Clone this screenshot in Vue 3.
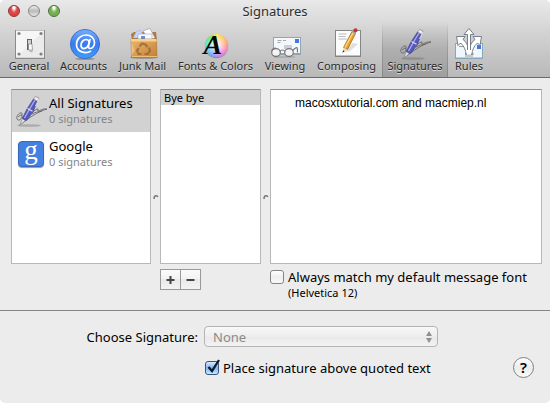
<script setup>
import { ref } from 'vue'

const tabs = ['General', 'Accounts', 'Junk Mail', 'Fonts & Colors', 'Viewing', 'Composing', 'Signatures', 'Rules']
const activeTab = ref('Signatures')
const accounts = [
  { name: 'All Signatures', count: 0 },
  { name: 'Google', count: 0 },
]
const activeAccount = ref('All Signatures')
const body = ref('macosxtutorial.com and macmiep.nl')
const matchFont = ref(false)
const placeAbove = ref(true)
</script>

<template>
  <main class="window">
    <svg class="defs" aria-hidden="true">
      <defs>
        <linearGradient id="blue" x1="0" y1="0" x2="0" y2="1"><stop offset="0" stop-color="#77aefa" /><stop offset=".5" stop-color="#3a7bed" /><stop offset="1" stop-color="#3f9dff" /></linearGradient>
        <linearGradient id="bag" x1="0" y1="0" x2="1" y2="1"><stop offset="0" stop-color="#e9b36d" /><stop offset=".5" stop-color="#d99c53" /><stop offset="1" stop-color="#c18037" /></linearGradient>
        <symbol id="pen" viewBox="0 0 32 32">
          <ellipse cx="14" cy="30.500" rx="12" ry="1.300" fill="#555" opacity=".3" />
          <g fill="none" stroke="#666" stroke-width=".9">
            <path d="M5 18c-2 1-4 4-3 6s4 1 5-2-2-2-4 0M5 18c2-1 3 1 1 3" />
            <path d="M7 23c7-3 11-7 15-9 2-1 0 2 1 2 2 0 5-3 9-2-10 3-18 9-26 15M17 19c3-2 6-2 10-3" />
          </g>
          <path d="M4.500 30.500 8 22.500l3.500 2z" fill="#e8e8e8" stroke="#777" stroke-width=".6" />
          <path d="M7.500 23 12 14l6.500-10 4 2L18 17l-6.500 8.500c-1.500 0-3.500-1-4-2.500z" fill="#5558bd" stroke="#3a3c86" stroke-width=".6" />
          <path d="M9.500 23 14 15 20 5" fill="none" stroke="#aeb0f0" stroke-width="1.300" />
          <path d="m12.500 13.500 5 2.800" stroke="#dcdcec" stroke-width="1.300" />
          <path d="m18.500 4 2-2.500 3.500 1.500-1.500 3.500z" fill="#eeeef3" stroke="#777" stroke-width=".6" />
          <path d="m24 4-3.500 7" stroke="#e2e2ee" stroke-width="1" />
        </symbol>
      </defs>
    </svg>
    <header class="chrome">
      <div class="titlebar">
        <div class="lights">
          <button class="light red" type="button" aria-label="Close"></button>
          <button class="light gray" type="button" aria-label="Minimize"></button>
          <button class="light green" type="button" aria-label="Zoom"></button>
        </div>
        <h1 class="title">Signatures</h1>
      </div>
      <nav class="toolbar">
        <button
          v-for="tab in tabs"
          :key="tab"
          type="button"
          class="tab"
          :class="{ active: tab === activeTab }"
          @click="activeTab = tab"
        >
          <svg v-if="tab === 'General'" class="icon" viewBox="0 0 32 32">
            <rect x="2" y="2" width="30" height="29" fill="#8a8a8a" />
            <rect x="3" y="2.500" width="28" height="27" fill="#f6f6f6" />
            <path d="M3 29.500 31 2.500v27z" fill="#ebebeb" />
            <g fill="#7d838c"><circle cx="6" cy="5.500" r="1.600" /><circle cx="28" cy="5.500" r="1.600" /><circle cx="6" cy="26" r="1.600" /><circle cx="28" cy="26" r="1.600" /></g>
            <path d="M14 11h5v11h-5z" fill="#666" />
            <path d="M15 12h3v4h-3z" fill="#d0d0d0" />
            <path d="M15.500 16h3.500l.5 6h-4z" fill="#fafafa" stroke="#777" stroke-width=".6" />
            <path d="M15 22.500h5l-1 2z" fill="#aaa" />
          </svg>
          <svg v-else-if="tab === 'Accounts'" class="icon" viewBox="0 0 32 32">
            <ellipse cx="17" cy="30.800" rx="10" ry="1.200" fill="#666" opacity=".5" />
            <circle cx="17" cy="16" r="14.600" fill="url(#blue)" stroke="#2f62cf" stroke-width=".8" />
            <g fill="none" stroke="#fff" stroke-width="1.700" stroke-linecap="round">
              <path d="M22.500 23.300C18 26 8.500 24.500 8.500 16.500 8.500 11 13 7 18 7c5 0 8.500 3.300 8.500 7.700 0 3.300-2 5.800-4.200 5.800-2 0-2-1.500-1.600-3.200L22 11.500" />
              <path d="M21.300 14.500c-.3-2-1.500-3-3.300-3-3 0-5 3-5 5.800 0 2 1.100 3.300 2.800 3.300 2.700 0 4.500-2.600 5.200-5.300" />
            </g>
          </svg>
          <svg v-else-if="tab === 'Junk Mail'" class="icon" viewBox="0 0 32 32">
            <ellipse cx="17" cy="29.500" rx="14" ry="1.300" fill="#555" opacity=".5" />
            <path d="m4 6 3-2h22l1 8H5z" fill="#b07a3e" />
            <path d="m6 10 3-6 4-2 6 8z" fill="#c5d7fa" stroke="#8ea8db" stroke-width=".5" />
            <path d="m16 3 7-2.500 5 9.500-6 2z" fill="#fff" stroke="#999" stroke-width=".6" />
            <path d="M11 6h14v8H11z" fill="#f8faff" stroke="#8aa2cc" stroke-width=".6" />
            <path d="M14 8h4v3h-4z" fill="#6490dd" />
            <path d="M4 11h25.500l.5 18H4.500z" fill="url(#bag)" stroke="#ab7032" stroke-width=".6" />
            <path d="M4 11h25.500l.3 2.500H3.800z" fill="#f8d18f" />
            <path d="m4.500 14 3 8-3 6z" fill="#f1c17d" />
            <path d="M5 28.500h25" stroke="#f0bf77" />
            <g fill="none" stroke="#8d6234" stroke-width="2.200" opacity=".7"><path d="m12.500 18.500 2.500-3 3.500 1 2 2.500" /><path d="m22 19.500 1 3.500-2.500 3h-3" /><path d="M14.500 26h-3L10 22.500l2-2.500" /></g>
          </svg>
          <span v-else-if="tab === 'Fonts & Colors'" class="icon wheel"><i class="letter">A</i></span>
          <svg v-else-if="tab === 'Viewing'" class="icon" viewBox="0 0 32 32">
            <path d="M4 9h29v18H4z" fill="#95a4b2" />
            <path d="M5 10h26v15H5z" fill="#f5f8fb" />
            <path d="M26 11h4v4h-4z" fill="#3f79e8" />
            <path d="M8.500 12.500h4M8.500 14.500h3M14 12.500h3M15 18h8M15 20h8M17 22h5" stroke="#a3a8ad" stroke-width="1" />
            <g fill="#f4f4f4" stroke="#777" stroke-width="1.200"><ellipse cx="7" cy="24.500" rx="4.300" ry="3.800" /><ellipse cx="20" cy="24.500" rx="4.300" ry="3.800" /><path d="M11 23.500c1-2 4-2 5 0M23.500 22.500l3-2.500c2-1 2 0 2 4.500M3 23c0-2 2-3 4-3" fill="none" /></g>
            <path d="M5 29h21" stroke="#555" opacity=".35" />
          </svg>
          <svg v-else-if="tab === 'Composing'" class="icon" viewBox="0 0 32 32">
            <path d="M4 2h26v27H4z" fill="#858585" />
            <path d="M5 3h24v24.500H5z" fill="#fcfcfc" />
            <path d="M7.500 6h8M7.500 8.500h7M7.500 11h8" stroke="#aaa" stroke-width=".8" />
            <path d="m13 24 9-9 5 1-8 7z" fill="#aaa" opacity=".35" />
            <path d="m12.500 19.500 8.500-16 3.500 2-8 16z" fill="#eba02b" stroke="#946020" stroke-width=".7" />
            <path d="M14 19.500 22.500 4" stroke="#ffdc6e" stroke-width="1.400" />
            <path d="m11.800 24 .8-4.500 3.800 2z" fill="#f0d5a6" /><path d="m11.500 24.800.5-2.600 1.600 1z" fill="#222" />
            <path d="m20.500 4 1.400-2.500 3.600 2-1.400 2.600z" fill="#9da6b1" /><circle cx="24.500" cy="2.300" r="2.100" fill="#c73636" />
          </svg>
          <svg v-else-if="tab === 'Signatures'" class="icon" viewBox="0 0 32 32"><use href="#pen" /></svg>
          <svg v-else class="icon" viewBox="0 0 32 32">
            <path d="M2 15h28v16H2z" fill="#8ba6b7" />
            <path d="M3 16h26v13.500H3z" fill="#eff7fc" />
            <path d="M24 17h4v4h-4z" fill="#3f79e8" /><path d="M6 18.500h4M12 26h9M12 28h8" stroke="#999" />
            <g fill="#fff" stroke="#74808a" stroke-width="1" stroke-linejoin="round">
              <path d="M13 27c0-5-2-9-5.500-12L5 17.500 3.500 8.500h8.500l-2 3c3 2 5 6 6 10z" />
              <path d="M19 27c0-5 2-9 5.500-12l2.500 2.500 1.500-9H20l2 3c-3 2-5 6-6 10z" />
              <path d="M14.500 25V6.500H11l5-6 5 6h-3.500V25z" />
            </g>
            <path d="M13.800 22h4.400v4.500h-4.400z" fill="#fff" />
          </svg>
          <span class="tab-label">{{ tab }}</span>
        </button>
      </nav>
    </header>

    <section class="panes">
      <div class="pane accounts">
        <button
          v-for="account in accounts"
          :key="account.name"
          type="button"
          class="account"
          :class="{ active: account.name === activeAccount }"
          @click="activeAccount = account.name"
        >
          <svg v-if="account.name === 'All Signatures'" class="icon" viewBox="0 0 32 32"><use href="#pen" /></svg>
          <span v-else class="icon google"><span class="google-tile">g</span></span>
          <span class="account-text">
            <span class="account-name">{{ account.name }}</span>
            <span class="account-count">{{ account.count }} signatures</span>
          </span>
        </button>
      </div>
      <div class="grip"><svg class="grip-mark" viewBox="0 0 6 6"><path d="M1 5c0-4 3-4 4-2" fill="none" stroke="#777" stroke-width="1.500" /></svg></div>
      <div class="pane names">
        <button type="button" class="name active">Bye bye</button>
      </div>
      <div class="grip"><svg class="grip-mark" viewBox="0 0 6 6"><path d="M1 5c0-4 3-4 4-2" fill="none" stroke="#777" stroke-width="1.500" /></svg></div>
      <textarea v-model="body" class="pane editor" aria-label="Signature text" spellcheck="false"></textarea>

      <div class="add-remove">
        <button type="button" class="square" aria-label="Add signature"><svg class="glyph" viewBox="0 0 9 9"><path d="M4.500 1v8M.5 5h8" stroke="#444" stroke-width="2" /></svg></button>
        <button type="button" class="square" aria-label="Remove signature"><svg class="glyph" viewBox="0 0 9 9"><path d="M.5 5h8" stroke="#444" stroke-width="2" /></svg></button>
      </div>
      <div class="match">
        <label class="check">
          <span class="box">
            <input v-model="matchFont" type="checkbox" class="tick" />
            <svg v-if="matchFont" class="mark" viewBox="0 0 16 16"><path d="m3.500 8 3.500 4L14 1" fill="none" stroke="#0c1a33" stroke-width="2.300" /></svg>
          </span>
          Always match my default message font
        </label>
        <p class="hint">(Helvetica 12)</p>
      </div>
    </section>

    <section class="options">
      <label class="choose-label" for="choose">Choose Signature:</label>
      <div class="select-wrap">
        <select id="choose" class="select" disabled><option>None</option></select>
        <svg class="arrows" viewBox="0 0 6 12"><path d="M3 0 6 5H0zM3 12 0 7h6z" fill="#909090" /></svg>
      </div>
      <label class="check place">
        <span class="box">
          <input v-model="placeAbove" type="checkbox" class="tick" />
          <svg v-if="placeAbove" class="mark" viewBox="0 0 16 16"><path d="m3.500 8 3.500 4L14 1" fill="none" stroke="#0c1a33" stroke-width="2.300" /></svg>
        </span>
        Place signature above quoted text
      </label>
      <button type="button" class="help" aria-label="Help">?</button>
    </section>
  </main>
</template>

<style>
body { background: #fff; }
</style>

<style scoped>
* { box-sizing: border-box; }
button, select, textarea, input { margin: 0; padding: 0; border: 0; font: inherit; color: inherit; }
.window {
  display: flex;
  flex-direction: column;
  min-height: 100vh;
  overflow: hidden;
  border-radius: 5px;
  background: #ececec;
  font-family: "Lucida Grande", "Noto Sans", "Open Sans", sans-serif;
  font-size: 13px;
  line-height: 16px;
  color: #000;
}
.defs { position: absolute; width: 0; height: 0; }
.chrome {
  border-bottom: 1px solid #6a6a6a;
  background: linear-gradient(#e9e9e9, #d4d4d4 40%, #b9b9b9);
}
.titlebar {
  display: grid;
  grid-template-columns: 1fr auto 1fr;
  align-items: center;
  height: 22px;
  padding: 0 8px;
}
.lights { display: flex; gap: 8px; }
.light {
  width: 12px;
  height: 12px;
  border: 1px solid #666;
  border-radius: 50%;
}
.red { border-color: #8c3232; background: radial-gradient(ellipse at 50% 15%, #fff 0 10%, #e65352 40%, #d83b3b 65%, #ff9a90); }
.gray { border-color: #858585; background: linear-gradient(#eee, #b9b9b9 50%, #e6e6e6); }
.green { border-color: #467032; background: radial-gradient(ellipse at 50% 15%, #fff 0 10%, #7fb95b 40%, #6daa49 65%, #ccf69d); }
.title { margin: 0; font-size: 13px; font-weight: 400; color: #2e2e2e; text-shadow: 0 1px #eee; }
.toolbar {
  display: grid;
  grid-template-columns: 50px 59px 59px 87px 52px 71px 66px 42px;
  height: 55px;
  padding-left: 4px;
}
.tab {
  display: flex;
  flex-direction: column;
  align-items: center;
  padding-top: 6px;
  background: none;
  font-size: 11px;
  line-height: 12px;
  color: #2b2b2b;
  text-shadow: 0 1px #ddd;
}
.tab-label { white-space: nowrap; }
.tab.active {
  border: solid;
  border-width: 0 1px;
  border-image: linear-gradient(#8880, #888) 1;
  background: linear-gradient(#9990, #9998 50%, #8888);
}
.icon { display: block; flex: none; width: 32px; height: 32px; }
.wheel { display: flex; justify-content: center; align-items: center; position: relative; }
.wheel::before {
  content: "";
  width: 23px;
  height: 23px;
  margin: 2px 0 0 2px;
  border-radius: 50%;
  background: radial-gradient(#fff 5%, #fff0 70%), conic-gradient(#ffe650, #ff9080 90deg, #ee70df 140deg, #6da0ff 210deg, #46e4e0 265deg, #62ed66 320deg, #ffe650);
  box-shadow: 0 1px 1px #888;
}
.letter {
  position: absolute;
  top: 3px;
  left: 4px;
  font: italic bold 28px/28px "Liberation Serif", serif;
  color: #080808;
  text-shadow: none;
}
.panes {
  display: grid;
  flex: 1;
  grid-template-columns: 140px 9px 101px 9px 1fr;
  grid-template-rows: minmax(175px, 1fr) auto;
  row-gap: 5px;
  padding: 11px 8px 10px 11px;
  border-bottom: 1px solid #858585;
}
.pane { border: 1px solid #b8b8b8; border-top-color: #8e8e8e; background: #fff; }
.account {
  display: flex;
  align-items: center;
  gap: 2px;
  width: 100%;
  height: 43px;
  padding-left: 3px;
  border-bottom: 1px solid #fff;
  background: none;
  text-align: left;
}
.account.active, .name.active { background: #d2d2d2; }
.account-text { display: flex; flex-direction: column; padding-bottom: 1px; white-space: nowrap; }
.account-count { font-size: 11px; line-height: 15px; color: #858585; }
.google { display: flex; justify-content: center; align-items: center; }
.google-tile {
  width: 26px;
  height: 26px;
  border: 1px solid #3569bd;
  border-radius: 4px;
  background: #4480e0;
  box-shadow: 0 1px 1px #999;
  color: #fff;
  font: 27px/17px "Liberation Serif", serif;
  text-align: center;
}
.grip { display: flex; justify-content: center; align-items: center; padding-top: 40px; }
.grip-mark { width: 6px; height: 6px; }
.name { display: block; width: 100%; height: 15px; padding-left: 3px; font-size: 11px; line-height: 15px; text-align: left; }
.editor {
  display: block;
  width: 100%;
  padding: 5px 24px;
  border-radius: 0;
  outline: 0;
  resize: none;
  font: 12px/16px Helvetica, "Liberation Sans", sans-serif;
}
.add-remove { display: flex; grid-column: 3; height: 21px; }
.square {
  display: flex;
  justify-content: center;
  align-items: center;
  width: 21px;
  height: 21px;
  border: 1px solid #999;
  background: linear-gradient(#fbfbfb, #f2f2f2 50%, #e9e9e9 50%, #f3f3f3);
}
.square + .square { margin-left: -1px; }
.glyph { width: 9px; height: 9px; }
.match { grid-column: 5; }
.check { display: flex; align-items: center; gap: 4px; white-space: nowrap; }
.box { position: relative; display: block; width: 14px; height: 14px; }
.tick {
  display: block;
  appearance: none;
  width: 14px;
  height: 14px;
  border: 1px solid #848484;
  border-radius: 3px;
  background: linear-gradient(#fff, #eee 50%, #fafafa);
}
.tick:checked { border-color: #3c5284; background: linear-gradient(#dceafa, #7fb4ec 50%, #c2efff); }
.mark { position: absolute; top: -2px; left: 0; width: 16px; height: 16px; }
.hint { margin: 0 0 0 18px; font-size: 11px; line-height: 15px; }
.options {
  display: grid;
  grid-template-columns: 198px 234px 1fr;
  column-gap: 6px;
  row-gap: 10px;
  align-items: center;
  padding: 15px 16px 25px 0;
}
.choose-label { text-align: right; }
.select-wrap { position: relative; }
.select {
  display: block;
  appearance: none;
  width: 100%;
  height: 21px;
  padding: 0 8px;
  border: 1px solid #b4b4b4;
  border-radius: 4px;
  background: linear-gradient(#f8f8f8, #ededed 50%, #e8e8e8 50%, #f3f3f3);
  color: #8a8a8a;
  opacity: 1;
}
.arrows { position: absolute; top: 5px; right: 6px; width: 6px; height: 12px; }
.place { grid-column: 2; padding-left: 1px; }
.help {
  justify-self: end;
  width: 21px;
  height: 21px;
  border: 1px solid #808080;
  border-radius: 50%;
  background: linear-gradient(#fff, #ececec 50%, #fafafa);
  font-size: 15px;
  font-weight: 600;
  line-height: 19px;
  text-align: center;
}
</style>
